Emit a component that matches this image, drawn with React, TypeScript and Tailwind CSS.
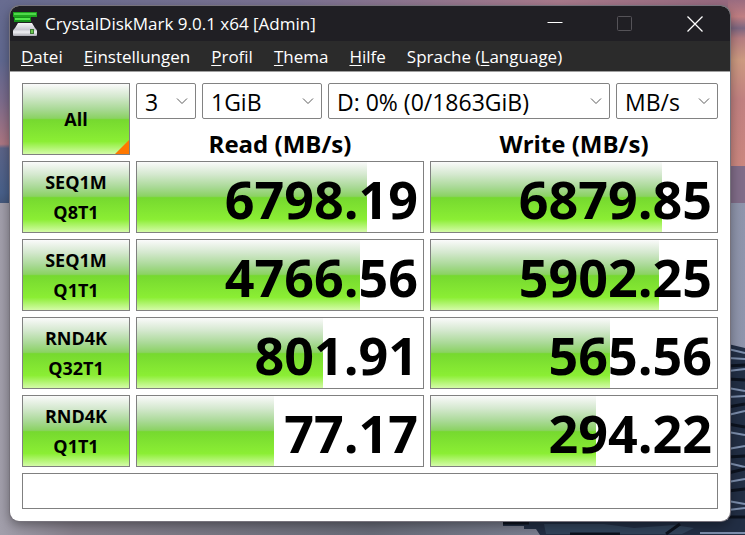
// src/App.tsx
import { useState } from "react";

type Result = {
  id: string;
  test: string;
  queue: string;
  read: string;
  write: string;
  readFill: number;
  writeFill: number;
};

// fill = bar width in % (log scale)
const results: Result[] = [
  { id: "seq1m-q8",  test: "SEQ1M", queue: "Q8T1",  read: "6798.19", write: "6879.85", readFill: 80.4, writeFill: 80.8 },
  { id: "seq1m-q1",  test: "SEQ1M", queue: "Q1T1",  read: "4766.56", write: "5902.25", readFill: 78,   writeFill: 79.8 },
  { id: "rnd4k-q32", test: "RND4K", queue: "Q32T1", read: "801.91",  write: "565.56",  readFill: 65,   writeFill: 62.7 },
  { id: "rnd4k-q1",  test: "RND4K", queue: "Q1T1",  read: "77.17",   write: "294.22",  readFill: 48,   writeFill: 57.8 },
];

const menu = [
  { before: "", key: "D", after: "atei" },
  { before: "", key: "E", after: "instellungen" },
  { before: "", key: "P", after: "rofil" },
  { before: "", key: "T", after: "hema" },
  { before: "", key: "H", after: "ilfe" },
  { before: "Sprache (", key: "L", after: "anguage)" },
];

const green =
  "bg-[linear-gradient(to_bottom,#fafafa_0%,#d4e8ce_18%,#a9d996_36%,#8bd263_49%,#76d92f_51%,#8bee34_82%,#d4fba8_100%)]";

// Sunset sky, sea and the rocks in the lower right corner
function Wallpaper() {
  return (
    <svg
      aria-hidden="true"
      className="absolute inset-0 -z-10 h-full w-full"
      viewBox="0 0 745 535"
      preserveAspectRatio="none"
    >
      <defs>
        <linearGradient id="sky" x1="0" x2="1">
          <stop offset="0" stopColor="#686c90" />
          <stop offset=".4" stopColor="#7b7292" />
          <stop offset=".75" stopColor="#a87a8c" />
          <stop offset="1" stopColor="#94687e" />
        </linearGradient>
        <linearGradient id="skyLeft" x1="0" x2="0" y1="0" y2="1">
          <stop offset="0" stopColor="#686c90" />
          <stop offset=".3" stopColor="#606890" />
          <stop offset=".5" stopColor="#7d6c8c" />
          <stop offset=".71" stopColor="#ac7682" />
          <stop offset=".73" stopColor="#5c6488" />
          <stop offset=".95" stopColor="#48608a" />
          <stop offset="1" stopColor="#44587c" />
        </linearGradient>
        <linearGradient id="skyRight" x1="0" x2="0" y1="0" y2="1">
          <stop offset="0" stopColor="#9a6c80" />
          <stop offset=".1" stopColor="#c07e82" />
          <stop offset=".17" stopColor="#7c6680" />
          <stop offset=".23" stopColor="#b47c80" />
          <stop offset=".36" stopColor="#cc9a80" />
          <stop offset=".6" stopColor="#c08080" />
          <stop offset="1" stopColor="#cb877f" />
        </linearGradient>
        <linearGradient id="ground" x1="0" x2="1">
          <stop offset="0" stopColor="#a29fab" />
          <stop offset=".1" stopColor="#86808c" />
          <stop offset=".5" stopColor="#686b78" />
          <stop offset="1" stopColor="#8f95ac" />
        </linearGradient>
      </defs>
      <rect width="745" height="203" fill="url(#sky)" />
      <rect width="12" height="203" fill="url(#skyLeft)" />
      <rect x="728" width="17" height="166" fill="url(#skyRight)" />
      <rect x="728" y="166" width="17" height="37" fill="#806c88" />
      <rect y="203" width="745" height="332" fill="url(#ground)" />
      <path d="M728 344l17 4v187H540l-4-6h-12v-3h-21v-6h225z" fill="#222e44" />
      <path d="M544 524h60l30 4 40-3 20 3-12 6H546z" fill="#31435a" />
      <g stroke="#7d8eac" strokeWidth="2" fill="none">
        <path d="M728 349l17 4M728 358l17 1M728 371l17-2M728 388l17 3M728 397l17-1M728 415l17-4M728 432l17 3M728 449l17-3M728 463l17 4M728 482l17-3M728 501l17 3M728 510l17-2M700 533h45" />
      </g>
      <g stroke="#0c121e" strokeWidth="3" fill="none">
        <path d="M728 366l17-1M728 379l17 1M728 407l17-3M728 424l17 3M728 457l17-1M728 473l17-4M728 491l17-2M728 517h17M503 523h26M680 524l-14 10M570 534h50" />
      </g>
    </svg>
  );
}

// Green SSD stick on top of a grey hard drive
function AppIcon() {
  return (
    <svg aria-hidden="true" className="h-6 w-6" viewBox="0 0 24 24">
      <defs>
        <linearGradient id="drive" x1="0" x2="0" y1="0" y2="1">
          <stop offset="0" stopColor="#f4f4f6" />
          <stop offset=".5" stopColor="#c9c9d2" />
          <stop offset=".7" stopColor="#eeeef2" />
          <stop offset="1" stopColor="#a9a9b2" />
        </linearGradient>
      </defs>
      <path d="M0 0h24v5H0z" fill="#1fa51f" />
      <path d="M1 1h22v2H1z" fill="#4fd84a" />
      <path d="M1 5h17v5H1z" fill="#15901a" />
      <path d="M2 6h15v2H2z" fill="#52e64c" />
      <path d="M5 11h14l3 5c1 1 2 2 2 3v4c0 1-1 1-2 1H2c-1 0-2 0-2-1v-4c0-1 1-2 2-3z" fill="url(#drive)" />
      <path d="M17 17h4v5h-4z" fill="#3c7a34" />
      <path d="M18 18h2v3h-2z" fill="#6cc850" />
    </svg>
  );
}

type SelectProps = { label: string; options: string[]; className: string };

function Select({ label, options, className }: SelectProps) {
  const [value, setValue] = useState(options[0]);

  return (
    <div className={`grid items-center ${className}`}>
      <select
        aria-label={label}
        value={value}
        onChange={(e) => setValue(e.target.value)}
        className="col-start-1 row-start-1 h-9 w-full appearance-none rounded-xs border border-[#828282] bg-white pt-0.5 pl-2 text-[23px] leading-7"
      >
        {options.map((o) => (
          <option key={o}>{o}</option>
        ))}
      </select>
      <svg
        aria-hidden="true"
        className="pointer-events-none col-start-1 row-start-1 mr-2 h-3 w-3 justify-self-end"
        viewBox="0 0 12 12"
        fill="none"
        stroke="#5c5c5c"
      >
        <path d="M1 3.5 6 8.5 11 3.5" />
      </svg>
    </div>
  );
}

function Meter({ value, fill, label }: { value: string; fill: number; label: string }) {
  return (
    <div aria-label={label} className="grid h-[72px] border border-[#808080] bg-white">
      <div className={`col-start-1 row-start-1 ${green}`} style={{ width: `${fill}%` }} />
      <div className="col-start-1 row-start-1 self-center justify-self-end pt-1 pr-[5px] text-[52px] leading-[64px] font-bold">
        {value}
      </div>
    </div>
  );
}

export default function App() {
  return (
    <div className="relative isolate min-h-screen overflow-hidden pt-1.5 pr-[15px] pl-2.5 font-['Open_Sans','Noto_Sans',sans-serif] text-black">
      <Wallpaper />

      <main className="overflow-hidden rounded-[9px] bg-white shadow-[0_0_0_1px_#77737c,0_4px_12px_rgba(0,0,0,0.4)]">
        <header className="flex h-[35px] items-center bg-[#201f24] pl-[3px] text-white">
          <AppIcon />
          <h1 className="ml-2 text-[17px] leading-6">CrystalDiskMark 9.0.1 x64 [Admin]</h1>
          <div className="ml-auto flex">
            <button type="button" aria-label="Minimieren" className="flex h-[35px] w-[70px] items-center justify-center">
              <svg className="h-4 w-4" viewBox="0 0 16 16" stroke="#fff"><path d="M.5 6.5h15" /></svg>
            </button>
            <button type="button" aria-label="Maximieren" disabled className="flex h-[35px] w-[70px] items-center justify-center">
              <svg className="h-4 w-4" viewBox="0 0 16 16" fill="none" stroke="#555358"><rect x=".5" y=".5" width="14" height="14" rx="1" /></svg>
            </button>
            <button type="button" aria-label="Schließen" className="flex h-[35px] w-[70px] items-center justify-center">
              <svg className="h-4 w-4" viewBox="0 0 16 16" stroke="#fff" strokeWidth="1.3"><path d="M.5.5l15 15M15.5.5l-15 15" /></svg>
            </button>
          </div>
        </header>

        <nav className="flex h-[31px] items-center gap-[21px] border-b border-[#a0a0a0] bg-[#2b2b2b] pt-0.5 pl-[11px] text-[17px] leading-6 text-white">
          {menu.map((m) => (
            <button key={m.key} type="button">
              {m.before}
              <span className="underline underline-offset-2">{m.key}</span>
              {m.after}
            </button>
          ))}
        </nav>

        <div className="px-3 pt-[11px] pb-3">
          <div className="grid grid-cols-[108px_1fr_1fr] gap-1.5">
            <button type="button" className={`relative h-[72px] border border-[#808080] text-lg font-bold ${green}`}>
              All
              <span className="absolute right-0 bottom-0 h-[14px] w-[14px] bg-[#ff7800] [clip-path:polygon(100%_0,100%_100%,0_100%)]" />
            </button>

            <div className="col-span-2">
              <div className="flex gap-1.5">
                <Select label="Durchläufe" options={["3", "1", "5", "9"]} className="w-[60px]" />
                <Select label="Testgröße" options={["1GiB", "2GiB", "4GiB"]} className="w-[120px]" />
                <Select label="Laufwerk" options={["D: 0% (0/1863GiB)"]} className="flex-1" />
                <Select label="Einheit" options={["MB/s", "GB/s", "IOPS"]} className="w-[102px]" />
              </div>
              <div className="grid grid-cols-2 gap-1.5 pt-3.5 text-center text-2xl leading-[22px] font-bold">
                <h2>Read (MB/s)</h2>
                <h2>Write (MB/s)</h2>
              </div>
            </div>

            {results.map((r) => (
              <div key={r.id} className="contents">
                <button
                  type="button"
                  className={`h-[72px] border border-[#808080] text-lg leading-[30px] font-bold ${green}`}
                >
                  {r.test}
                  <br />
                  {r.queue}
                </button>
                <Meter value={r.read} fill={r.readFill} label={`${r.test} ${r.queue} Read`} />
                <Meter value={r.write} fill={r.writeFill} label={`${r.test} ${r.queue} Write`} />
              </div>
            ))}
          </div>

          <input
            type="text"
            aria-label="Kommentar"
            className="mt-1.5 block h-9 w-full border border-[#808080] bg-white px-2 text-[23px]"
          />
        </div>
      </main>
    </div>
  );
}
